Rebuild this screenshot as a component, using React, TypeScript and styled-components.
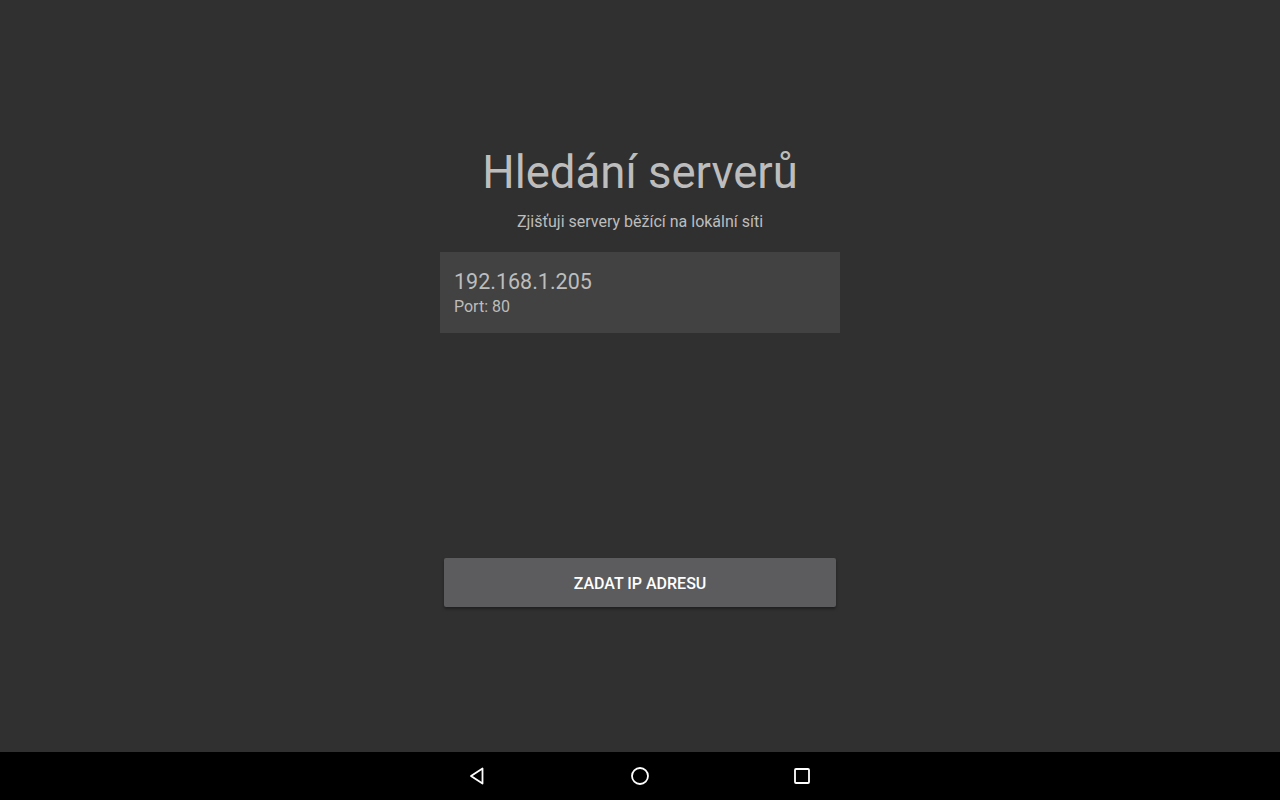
import React, { FC } from "react";
import styled, { createGlobalStyle } from "styled-components";

const GlobalStyle = createGlobalStyle`
  html, body {
    margin: 0;
    padding: 0;
    background: #303030;
    font-family: Roboto, "Noto Sans", sans-serif;
  }
`;

const Screen = styled.div`
  width: 1280px;
  height: 800px;
  display: flex;
  flex-direction: column;
  background: #303030;
`;

const Main = styled.main`
  flex: 1;
  display: flex;
  flex-direction: column;
  align-items: center;
  padding-top: 145px;
`;

const Title = styled.h1`
  margin: 0;
  font-size: 45.5px;
  line-height: 55px;
  font-weight: 400;
  color: #bdbdbd;
`;

const Subtitle = styled.p`
  margin: 12px 0 0;
  font-size: 16px;
  line-height: 20px;
  color: #bdbdbd;
`;

const ServerList = styled.ul`
  list-style: none;
  margin: 20px 0 0;
  padding: 0;
  width: 400px;
`;

const ServerItem = styled.li`
  background: #424242;
  padding: 18px 14px 16px;
  display: flex;
  flex-direction: column;
  gap: 3px;
`;

const Address = styled.span`
  font-size: 21.5px;
  line-height: 24px;
  color: #bdbdbd;
`;

const Port = styled.span`
  font-size: 16px;
  line-height: 20px;
  color: #bdbdbd;
`;

const Button = styled.button`
  margin-top: 225px;
  width: 392px;
  height: 49px;
  border: none;
  border-radius: 2px;
  background: #5c5c5e;
  color: #ffffff;
  font-family: Roboto, sans-serif;
  font-size: 16px;
  font-weight: 500;
  padding: 1px 0 0;
  box-shadow: 0 2px 3px rgba(0, 0, 0, 0.35);
  cursor: pointer;
`;

const NavBar = styled.nav`
  height: 48px;
  background: #000;
  display: flex;
  justify-content: center;
  align-items: center;
  gap: 138px;
`;

const NavIcon = styled.svg`
  width: 24px;
  height: 24px;
  display: block;
`;

const servers = [{ ip: "192.168.1.205", port: 80 }];

const App: FC = () => (
  <>
    <GlobalStyle />
    <Screen>
      <Main>
        <Title>Hledání serverů</Title>
        <Subtitle>Zjišťuji servery běžící na lokální síti</Subtitle>
        <ServerList>
          {servers.map((s) => (
            <ServerItem key={s.ip}>
              <Address>{s.ip}</Address>
              <Port>Port: {s.port}</Port>
            </ServerItem>
          ))}
        </ServerList>
        <Button>ZADAT IP ADRESU</Button>
      </Main>
      <NavBar>
        <NavIcon viewBox="0 0 24 24">
          <path
            d="M16.5 4.5 L16.5 19.5 L5 12 Z"
            fill="none"
            stroke="#fff"
            strokeWidth="1.8"
            strokeLinejoin="round"
          />
        </NavIcon>
        <NavIcon viewBox="0 0 24 24">
          <circle cx="12" cy="12" r="8" fill="none" stroke="#fff" strokeWidth="1.8" />
        </NavIcon>
        <NavIcon viewBox="0 0 24 24">
          <rect x="5" y="5" width="14" height="14" rx="1" fill="none" stroke="#fff" strokeWidth="1.8" />
        </NavIcon>
      </NavBar>
    </Screen>
  </>
);

export default App;
